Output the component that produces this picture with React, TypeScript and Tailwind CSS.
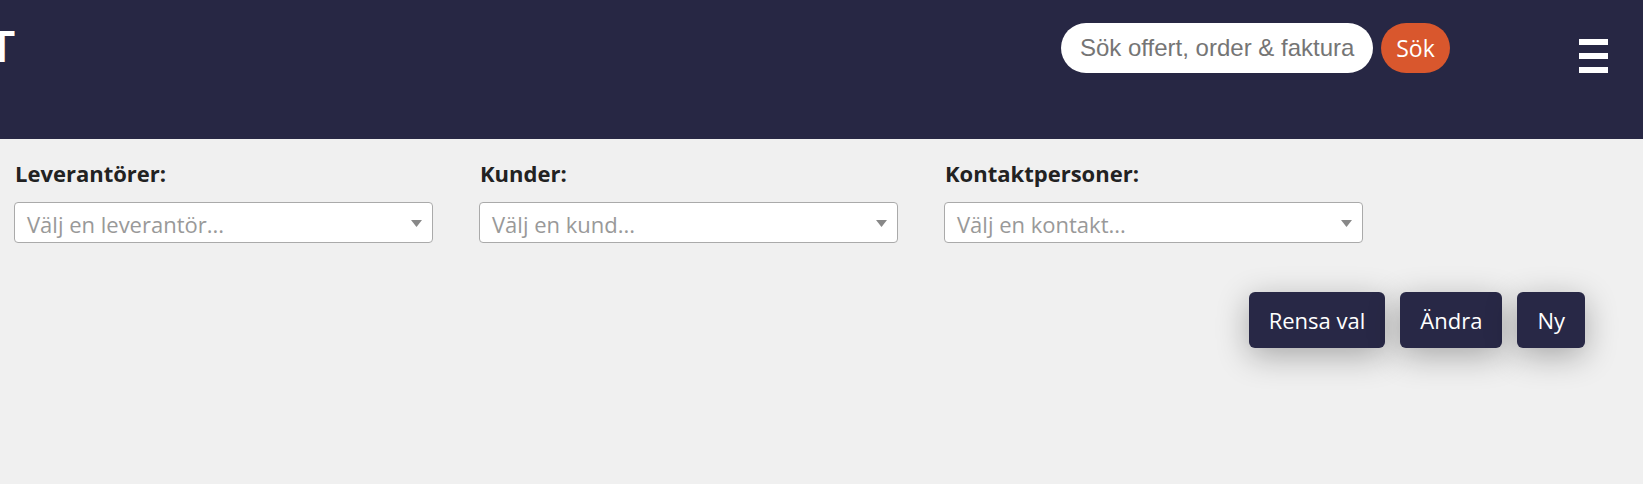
import React from 'react';

const fields = [
  { label: 'Leverantörer:', placeholder: 'Välj en leverantör...' },
  { label: 'Kunder:', placeholder: 'Välj en kund...' },
  { label: 'Kontaktpersoner:', placeholder: 'Välj en kontakt...' },
];

const SelectBox: React.FC<{ placeholder: string }> = ({ placeholder }) => (
  <div className="flex h-[41px] w-[419px] items-center justify-between rounded-[4px] border border-[#aaaaaa] bg-white pl-[12px] pr-[10px]">
    <span className="mt-[3px] text-[22px] leading-none text-[#999999]">{placeholder}</span>
    <svg width="11" height="7" viewBox="0 0 11 7" className="mt-[2px]">
      <path d="M0 0 H11 L5.5 7 Z" fill="#888888" />
    </svg>
  </div>
);

export default function App() {
  return (
    <div className="min-h-screen bg-[#f0f0f0] font-['Open_Sans',sans-serif]">
      {/* header */}
      <header className="flex h-[139px] items-start overflow-hidden bg-[#272744]">
        <div className="ml-[-12px] mt-[20px] font-['Liberation_Sans',sans-serif] text-[44px] font-bold leading-[54px] text-white">
          T
        </div>
        <div className="ml-auto mt-[23px] flex items-center gap-[8px]">
          <div className="flex h-[50px] w-[312px] items-center overflow-hidden rounded-full bg-white pl-[19px]">
            <span className="whitespace-nowrap font-['Liberation_Sans',sans-serif] text-[24px] text-[#757575]">
              Sök offert, order &amp; faktura
            </span>
          </div>
          <button className="flex h-[50px] w-[69px] items-center justify-center rounded-full bg-[#d9572d] text-[23px] text-white">
            Sök
          </button>
        </div>
        <div className="ml-[129px] mr-[35px] mt-[39px] flex w-[29px] flex-col gap-[8px]">
          <span className="block h-[6px] bg-white" />
          <span className="block h-[6px] bg-white" />
          <span className="block h-[6px] bg-white" />
        </div>
      </header>

      {/* filters */}
      <main className="px-[14px] pt-[19px]">
        <div className="flex gap-[46px]">
          {fields.map((f) => (
            <div key={f.label} className="flex flex-col">
              <label className="mb-[14px] pl-[1px] text-[22px] font-bold leading-[30px] text-[#222222]">
                {f.label}
              </label>
              <SelectBox placeholder={f.placeholder} />
            </div>
          ))}
        </div>

        <div className="mt-[49px] flex justify-end gap-[15px] pr-[44px]">
          {['Rensa val', 'Ändra', 'Ny'].map((t) => (
            <button
              key={t}
              className="h-[56px] rounded-[6px] bg-[#282846] px-[20px] text-[22px] text-white shadow-[0_8px_32px_rgba(0,0,0,0.3)]"
            >
              {t}
            </button>
          ))}
        </div>
      </main>
    </div>
  );
}
